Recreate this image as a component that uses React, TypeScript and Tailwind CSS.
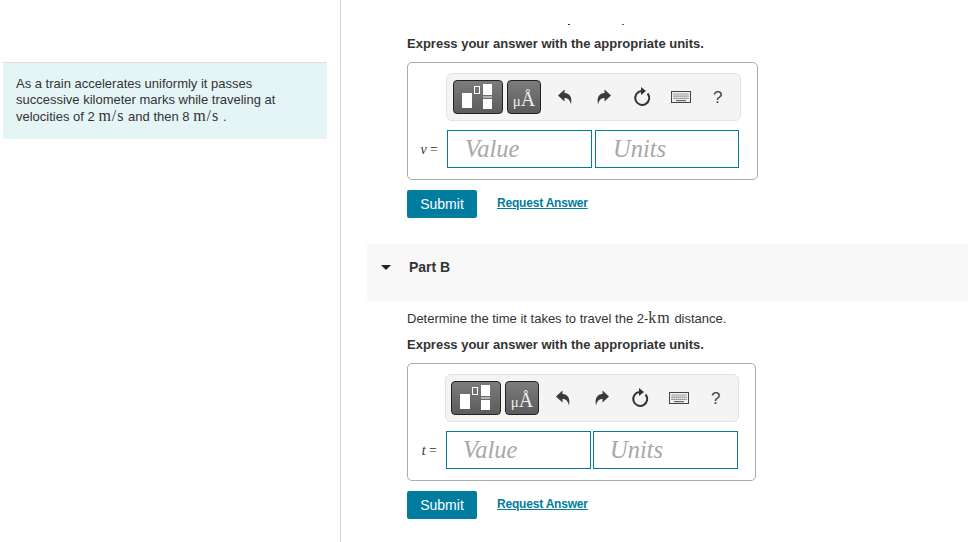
const Undo = ({ flip = false }: { flip?: boolean }) => (
  <svg width="16" height="18" viewBox="0 0 16 18" className={flip ? "-scale-x-100" : ""}>
    <path d="M1 7.5 L7.5 1.5 V5 C12.5 5 15.5 9 14 16.5 C13 12.5 11.5 10 7.5 10 V13.5 Z" fill="#3a3a3a" />
  </svg>
);

const Reload = () => (
  <svg width="18" height="20" viewBox="0 0 18 20">
    <path d="M14.6 6.5 A7 7 0 1 1 8.5 4" fill="none" stroke="#333" strokeWidth="2" />
    <path d="M8 0 L8 8 L13 4 Z" fill="#333" />
  </svg>
);

const Keyboard = () => (
  <svg width="20" height="12" viewBox="0 0 20 12">
    <rect x="0.5" y="0.5" width="19" height="11" fill="#f0f0f0" stroke="#444" />
    <path d="M2.5 3 H17.5 M2.5 5.2 H17.5" stroke="#666" strokeWidth="1.2" strokeDasharray="1.2 0.8" />
    <path d="M2.5 7.4 H17.5" stroke="#666" strokeWidth="1.2" strokeDasharray="1.2 0.8" />
    <path d="M5 9.6 H15" stroke="#666" strokeWidth="1.2" />
  </svg>
);

const Templates = () => (
  <svg width="32" height="26" viewBox="0 0 32 26">
    <rect x="0" y="9" width="10" height="15" fill="#fff" />
    <rect x="12.5" y="2.5" width="5" height="7" fill="none" stroke="#fff" strokeWidth="1" />
    <rect x="21" y="0" width="9" height="11" fill="#fff" />
    <rect x="21" y="12.5" width="9" height="1" fill="#fff" />
    <rect x="21" y="15" width="9" height="10" fill="#fff" />
  </svg>
);

function AnswerBox({
  label,
  width,
  toolbarClass,
  unitsClass,
  labelWidth,
  valuePad,
}: {
  label: string;
  width: string;
  toolbarClass: string;
  unitsClass: string;
  labelWidth: string;
  valuePad: string;
}) {
  return (
    <div>
      <div className={`${width} h-[118px] border border-[#aaaaaa] rounded-[5px] pt-[10px]`}>
        <div className={`${toolbarClass} h-[48px] bg-[#f4f4f4] border border-[#e2e2e2] rounded-[6px] flex items-center`}>
          <div className="w-[50px] h-[34px] rounded-[4px] border border-[#222] bg-gradient-to-b from-[#7c7c7c] to-[#5c5c5c] flex items-center justify-center">
            <Templates />
          </div>
          <div className="ml-[4px] w-[34px] h-[34px] rounded-[4px] border border-[#222] bg-gradient-to-b from-[#7c7c7c] to-[#5c5c5c] flex items-end justify-center pb-[4px] text-[#eeeeee] font-['Liberation_Serif',serif] leading-none">
            <span className="text-[15px]">μ</span>
            <span className="text-[20px]">Å</span>
          </div>
          <div className="ml-[16px] w-[16px] flex justify-center"><Undo /></div>
          <div className="ml-[23px] w-[16px] flex justify-center"><Undo flip /></div>
          <div className="ml-[21px] w-[18px] flex justify-center"><Reload /></div>
          <div className="ml-[20px] w-[20px] flex justify-center"><Keyboard /></div>
          <div className="ml-[22px] text-[17px] text-[#444] font-['Liberation_Sans',sans-serif] leading-none">?</div>
        </div>
        <div className="flex items-center mt-[9px]">
          <div className={`${labelWidth} text-right pr-[9px] text-[14px] text-[#333] font-['Liberation_Serif',serif]`}>
            <i>{label}</i> =
          </div>
          <div className={`w-[145px] h-[38px] border border-[#007c9e] flex items-center ${valuePad} font-['Liberation_Serif',serif] italic text-[24.5px] text-[#a8a8a8]`}>
            Value
          </div>
          <div className={`${unitsClass} h-[38px] border border-[#007c9e] flex items-center font-['Liberation_Serif',serif] italic text-[24.5px] text-[#a8a8a8]`}>
            Units
          </div>
        </div>
      </div>
      <div className="flex items-center mt-[10px]">
        <div className="w-[70px] h-[28px] bg-[#007c9e] rounded-[2px] text-white text-[14px] flex items-center justify-center">
          Submit
        </div>
        <div className="ml-[20px] -mt-[2px] text-[#007c9e] text-[12px] tracking-[-0.2px] font-bold underline">Request Answer</div>
      </div>
    </div>
  );
}

const Unit = ({ children }: { children: string }) => (
  <span className="font-['Liberation_Serif',serif] text-[16px] leading-none tracking-[1px]">{children}</span>
);

export default function App() {
  return (
    <div className="flex w-[968px] h-[542px] overflow-hidden bg-white font-['Liberation_Sans',sans-serif] text-[#333]">
      <div className="w-[341px] shrink-0 border-r border-[#c2d8e6] pt-[62px] pl-[3px]">
        <div className="w-[324px] h-[77px] bg-[#e5f5f6] border-t border-[#dedede] pl-[13px] pt-[13px] text-[13px] leading-[16px]">
          As a train accelerates uniformly it passes
          <br />
          successive kilometer marks while traveling at
          <br />
          velocities of 2 <Unit>m/s</Unit> and then 8 <Unit>m/s</Unit> .
        </div>
      </div>
      <div className="flex-1 min-w-0 pl-[26px]">
        <div className="h-[25px] pt-[24px] ml-[201px] flex items-start">
          <div className="w-[2px] h-[1px] bg-[#333]" />
          <div className="w-[2px] h-[1px] bg-[#007c9e] ml-[52px]" />
        </div>
        <div className="ml-[40px] mt-[11px] text-[13px] leading-[16px] font-bold">
          Express your answer with the appropriate units.
        </div>
        <div className="ml-[40px] mt-[10px]">
          <AnswerBox
            label="v"
            width="w-[351px]"
            toolbarClass="w-[295px] ml-[38px] pl-[6px]"
            unitsClass="w-[144px] ml-[3px] pl-[17px]"
            labelWidth="w-[39px]"
            valuePad="pl-[17px]"
          />
        </div>
        <div className="mt-[26px] h-[57px] bg-[#f8f8f8] flex pt-[21px] pl-[14px]">
          <div className="w-0 h-0 border-x-[5px] border-x-transparent border-t-[5px] border-t-[#222]" />
          <div className="ml-[18px] -mt-[6px] h-[16px] text-[14px] leading-[16px] font-bold">Part B</div>
        </div>
        <div className="ml-[40px] mt-[9px] text-[13px] leading-[18px]">
          Determine the time it takes to travel the 2-<Unit>km</Unit> distance.
        </div>
        <div className="ml-[40px] mt-[9px] text-[13px] leading-[16px] font-bold">
          Express your answer with the appropriate units.
        </div>
        <div className="ml-[40px] mt-[10px]">
          <AnswerBox
            label="t"
            width="w-[349px]"
            toolbarClass="w-[294px] ml-[37px] pl-[5px]"
            unitsClass="w-[145px] ml-[2px] pl-[16px]"
            labelWidth="w-[38px]"
            valuePad="pl-[16px]"
          />
        </div>
      </div>
    </div>
  );
}
